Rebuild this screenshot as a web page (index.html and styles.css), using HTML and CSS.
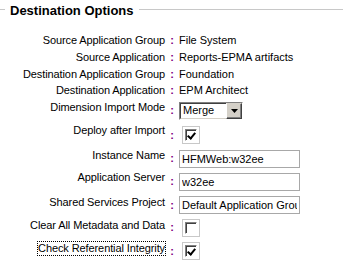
FILE: index.html
```html
<!DOCTYPE html>
<html lang="en">
<head>
    <meta charset="UTF-8">
    <title>Destination Options</title>
    <link rel="stylesheet" href="styles.css">
</head>
<body>
    <div class="panel">
        <div class="legend">
            <span class="line-left"></span>
            <span class="title">Destination Options</span>
            <span class="line-right"></span>
        </div>

        <div class="options">
            <div class="label">Source Application Group</div>
            <div class="colon">:</div>
            <div class="value">File System</div>

            <div class="label">Source Application</div>
            <div class="colon">:</div>
            <div class="value">Reports-EPMA artifacts</div>

            <div class="label">Destination Application Group</div>
            <div class="colon">:</div>
            <div class="value">Foundation</div>

            <div class="label">Destination Application</div>
            <div class="colon">:</div>
            <div class="value">EPM Architect</div>

            <div class="label top">Dimension Import Mode</div>
            <div class="colon">:</div>
            <div class="value">
                <div class="select">
                    <span class="select-text">Merge</span>
                    <span class="select-btn">
                        <svg width="7" height="4" viewBox="0 0 7 4"><path d="M0 0h7L3.5 4z" fill="#000"/></svg>
                    </span>
                </div>
            </div>

            <div class="label top">Deploy after Import</div>
            <div class="colon">:</div>
            <div class="value">
                <span class="check-wrap"><span class="check checked"></span></span>
            </div>

            <div class="label top-high">Instance Name</div>
            <div class="colon">:</div>
            <div class="value"><input class="text" type="text" value="HFMWeb:w32ee"></div>

            <div class="label top">Application Server</div>
            <div class="colon">:</div>
            <div class="value"><input class="text" type="text" value="w32ee"></div>

            <div class="label top">Shared Services Project</div>
            <div class="colon">:</div>
            <div class="value"><input class="text" type="text" value="Default Application Group"></div>

            <div class="label top-low">Clear All Metadata and Data</div>
            <div class="colon">:</div>
            <div class="value">
                <span class="check-wrap"><span class="check"></span></span>
            </div>

            <div class="label top-low"><span class="focused">Check Referential Integrity</span></div>
            <div class="colon">:</div>
            <div class="value">
                <span class="check-wrap"><span class="check checked"></span></span>
            </div>
        </div>
    </div>
</body>
</html>
```

FILE: styles.css
```css
* {
    box-sizing: border-box;
    margin: 0;
    padding: 0;
}

body {
    font-family: 'Liberation Sans', Arial, sans-serif;
    font-size: 11px;
    line-height: 13px;
    color: #000;
    background: #fff;
}

.panel {
    padding-top: 2px;
}

.legend {
    display: flex;
    align-items: center;
    height: 15px;
}

.line-left {
    width: 5px;
    border-top: 1px solid #c8c8c8;
}

.title {
    font-size: 13px;
    line-height: 15px;
    font-weight: bold;
    padding: 2px 5px 0;
    color: #000;
}

.line-right {
    flex: 1;
    border-top: 1px solid #c8c8c8;
}

.options {
    display: grid;
    grid-template-columns: 165px 14px auto;
    grid-template-rows: 17px 17px 16px 17px 23px 26px 21px 25px 22px 23px 24px;
    margin-top: 15px;
}

.label, .colon, .value {
    display: flex;
    align-items: center;
    white-space: nowrap;
}

.label {
    justify-content: flex-end;
    letter-spacing: -0.1px;
}

.label.top,
.label.top-high,
.label.top-low {
    align-items: flex-start;
    padding-top: 2px;
}

.label.top-high {
    padding-top: 1px;
}

.label.top-low {
    padding-top: 3px;
}

.colon {
    justify-content: center;
    color: #800080;
    font-weight: bold;
}

.select {
    display: flex;
    width: 64px;
    height: 18px;
    border: 1px solid;
    border-color: #808080 #fff #fff #808080;
}

.select-text {
    flex: 1;
    display: flex;
    align-items: center;
    padding-left: 2px;
    border: 1px solid;
    border-color: #404040 #d4d0c8 #d4d0c8 #404040;
    border-right: none;
}

.select-btn {
    width: 16px;
    display: flex;
    align-items: center;
    justify-content: center;
    background: #d4d0c8;
    border: 1px solid;
    border-color: #d4d0c8 #404040 #404040 #fff;
    box-shadow: inset -1px -1px 0 #808080;
}

.check-wrap {
    display: inline-block;
    width: 18px;
    height: 18px;
    margin-left: 3px;
    border: 1px solid #c8c8c8;
    padding: 2px;
}

.check {
    display: block;
    width: 12px;
    height: 12px;
    border: 1px solid;
    border-color: #808080 #fff #fff #808080;
    box-shadow: inset 1px 1px 0 #404040;
    background: #fff;
    position: relative;
}

.check.checked::after {
    content: "";
    position: absolute;
    left: 3px;
    top: 1px;
    width: 3px;
    height: 6px;
    border: solid #000;
    border-width: 0 2px 2px 0;
    transform: rotate(40deg);
}

.text {
    width: 121px;
    height: 18px;
    border: 1px solid #a8a8a8;
    padding: 0 2px;
    font-family: 'Liberation Sans', Arial, sans-serif;
    font-size: 11px;
    color: #000;
    outline: none;
}

.focused {
    outline: 1px dotted #000;
}
```
